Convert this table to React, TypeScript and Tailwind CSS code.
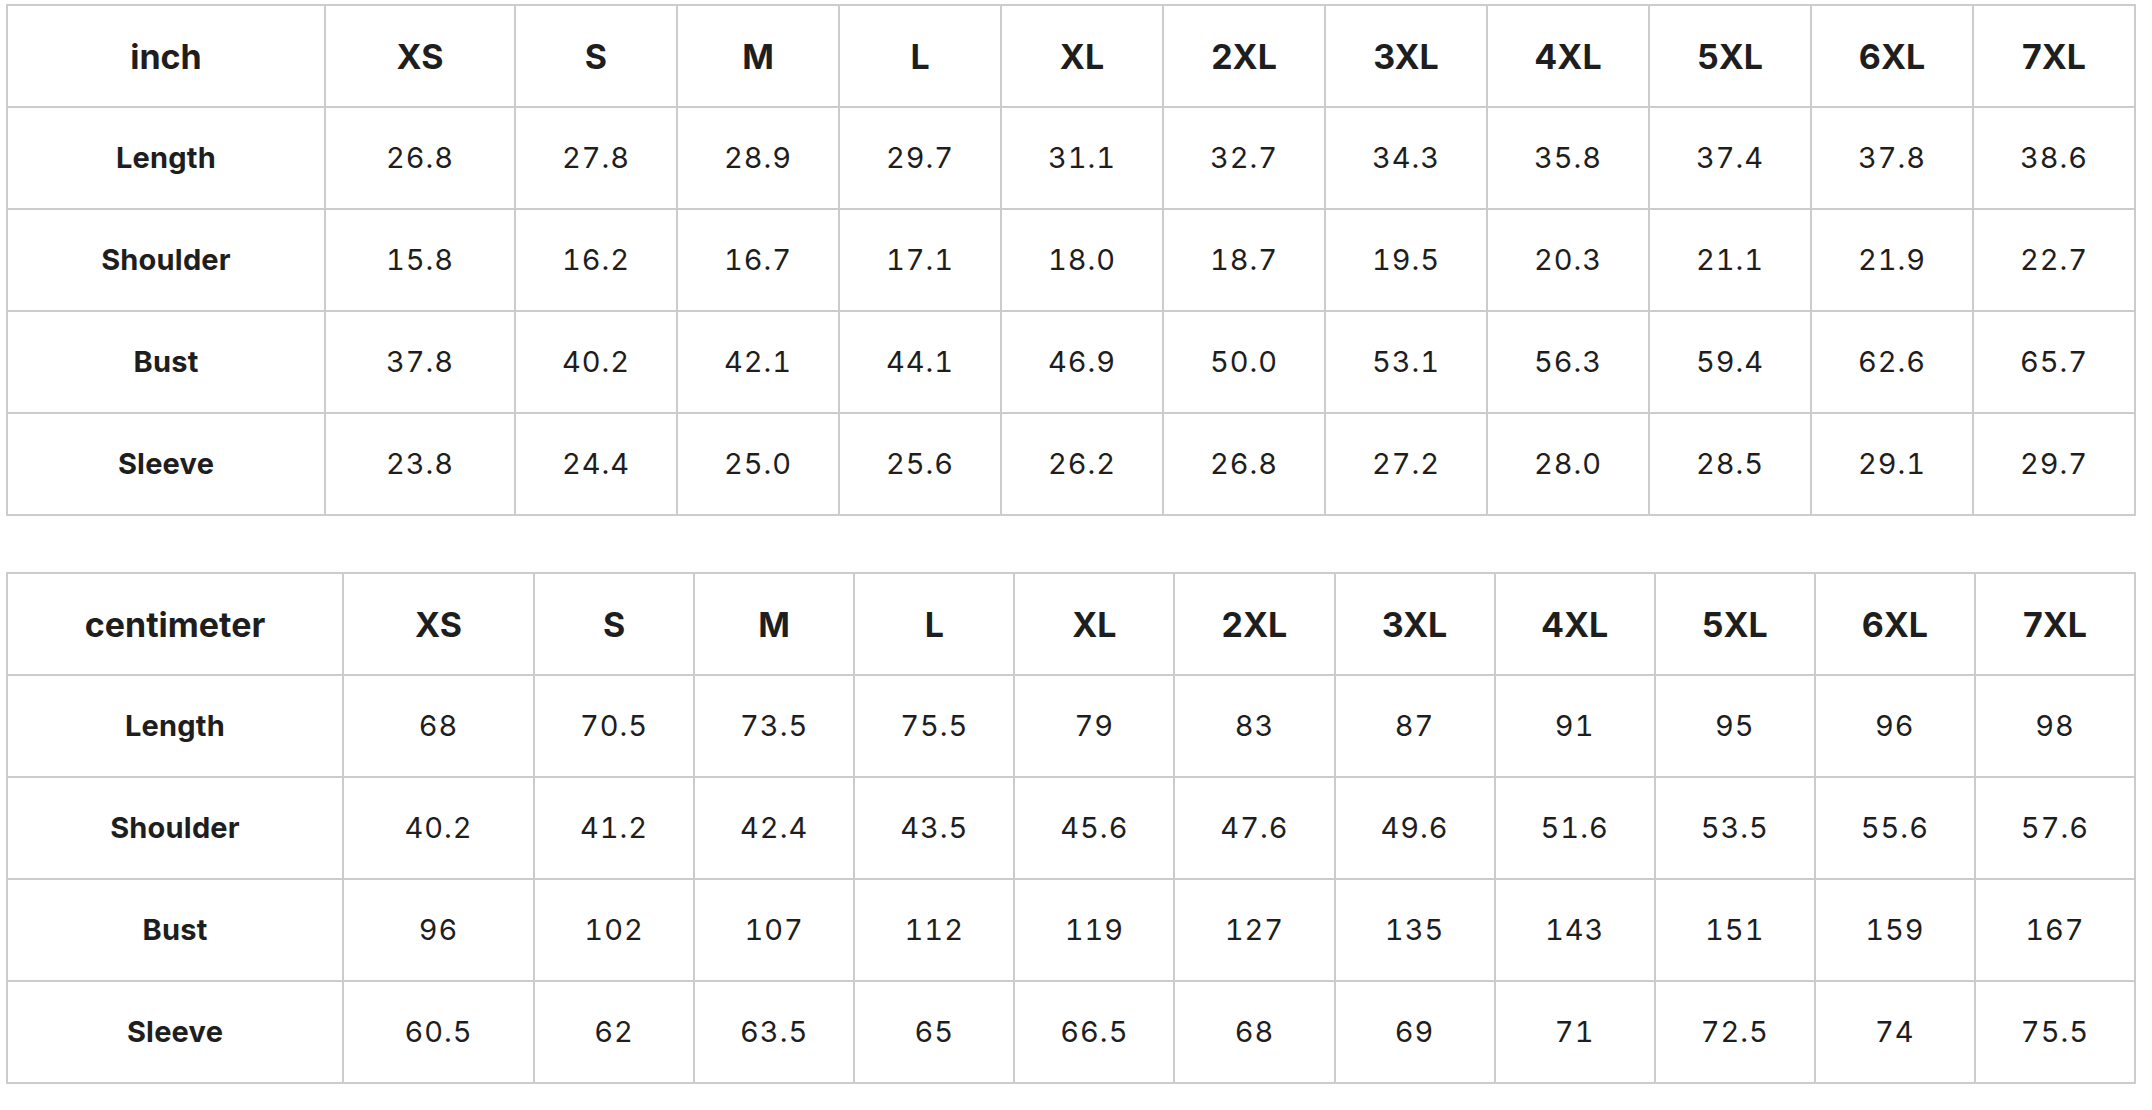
import React from "react";

type TableData = {
  unit: string;
  cols: string;
  rows: { label: string; values: string[] }[];
};

const sizes = ["XS", "S", "M", "L", "XL", "2XL", "3XL", "4XL", "5XL", "6XL", "7XL"];

const inch: TableData = {
  unit: "inch",
  cols: "grid-cols-[316px_188px_repeat(10,1fr)]",
  rows: [
    { label: "Length", values: ["26.8", "27.8", "28.9", "29.7", "31.1", "32.7", "34.3", "35.8", "37.4", "37.8", "38.6"] },
    { label: "Shoulder", values: ["15.8", "16.2", "16.7", "17.1", "18.0", "18.7", "19.5", "20.3", "21.1", "21.9", "22.7"] },
    { label: "Bust", values: ["37.8", "40.2", "42.1", "44.1", "46.9", "50.0", "53.1", "56.3", "59.4", "62.6", "65.7"] },
    { label: "Sleeve", values: ["23.8", "24.4", "25.0", "25.6", "26.2", "26.8", "27.2", "28.0", "28.5", "29.1", "29.7"] },
  ],
};

const cm: TableData = {
  unit: "centimeter",
  cols: "grid-cols-[334px_189px_repeat(10,1fr)]",
  rows: [
    { label: "Length", values: ["68", "70.5", "73.5", "75.5", "79", "83", "87", "91", "95", "96", "98"] },
    { label: "Shoulder", values: ["40.2", "41.2", "42.4", "43.5", "45.6", "47.6", "49.6", "51.6", "53.5", "55.6", "57.6"] },
    { label: "Bust", values: ["96", "102", "107", "112", "119", "127", "135", "143", "151", "159", "167"] },
    { label: "Sleeve", values: ["60.5", "62", "63.5", "65", "66.5", "68", "69", "71", "72.5", "74", "75.5"] },
  ],
};

function SizeTable({ data }: { data: TableData }) {
  return (
    <div className={`grid ${data.cols} w-[2130px] gap-[2px] p-[2px] bg-[#cccccc]`}>
      <div className="h-[100px] bg-white flex items-center justify-center text-[34px] font-bold">{data.unit}</div>
      {sizes.map((s) => (
        <div key={s} className="h-[100px] bg-white flex items-center justify-center text-[34px] font-bold">
          {s}
        </div>
      ))}
      {data.rows.map((r) => (
        <React.Fragment key={r.label}>
          <div className="h-[100px] bg-white flex items-center justify-center text-[29px] font-bold tracking-[0.2px]">
            {r.label}
          </div>
          {r.values.map((v, i) => (
            <div
              key={i}
              className="h-[100px] bg-white flex items-center justify-center text-[29px] tabular-nums tracking-[1px]"
            >
              {v}
            </div>
          ))}
        </React.Fragment>
      ))}
    </div>
  );
}

export default function App() {
  return (
    <div
      className="min-h-screen bg-white pt-[4px] pl-[6px] text-[#1e1e1e]"
      style={{ fontFamily: "Inter, 'Noto Sans', sans-serif" }}
    >
      <SizeTable data={inch} />
      <div className="h-[56px]" />
      <SizeTable data={cm} />
    </div>
  );
}
